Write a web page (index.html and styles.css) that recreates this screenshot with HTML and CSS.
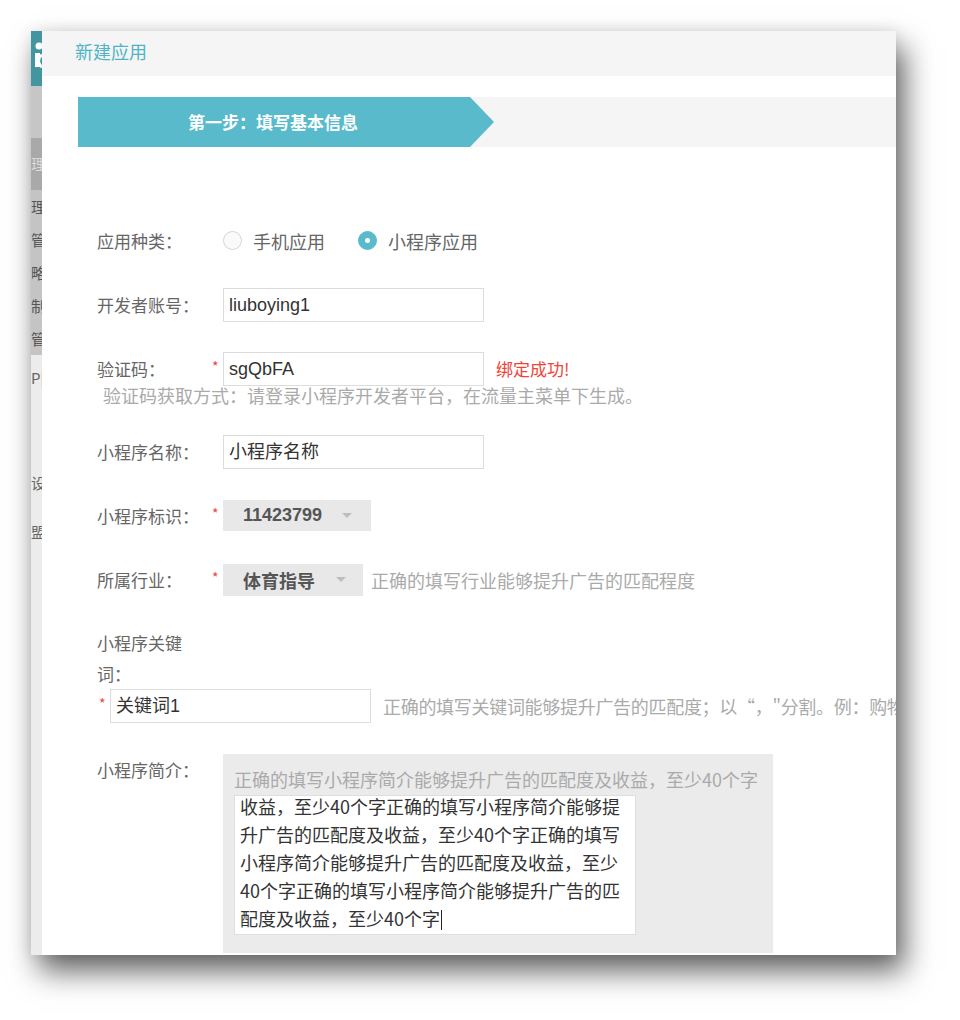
FILE: index.html
```html
<!DOCTYPE html>
<html lang="zh-CN">
<head>
  <meta charset="UTF-8" />
  <title>新建应用</title>
  <link rel="stylesheet" href="styles.css">
</head>
<body>
  <div class="window">
    <div class="side">
      <div class="side-logo">
        <svg width="11" height="55" viewBox="0 0 11 55">
          <circle cx="8" cy="15" r="3.5" fill="#fff" />
          <path d="M4 22 h5 v14 h-5 z" fill="#fff" />
          <path d="M11 24 a7 7 0 0 0 0 12" stroke="#fff" stroke-width="3" fill="none" />
        </svg>
      </div>
      <div class="side-gap"></div>
      <div class="side-active">理</div>
      <ul class="side-menu">
        <li>理</li>
        <li>管</li>
        <li>略</li>
        <li>制</li>
        <li>管</li>
      </ul>
      <div class="side-rest">
        <span class="side-p">P|</span>
        <span class="side-s">设</span>
        <span class="side-m">盟</span>
      </div>
    </div>

    <div class="main">
      <div class="head">新建应用</div>

      <div class="steps">
        <div class="step-on">第一步：填写基本信息</div>
      </div>

      <div class="form">
        <div class="row">
          <label class="lbl">应用种类：</label>
          <span class="star"></span>
          <div class="radios">
            <span class="radio"><i class="dot"></i>手机应用</span>
            <span class="radio on"><i class="dot"></i>小程序应用</span>
          </div>
        </div>

        <div class="row">
          <label class="lbl">开发者账号：</label>
          <span class="star"></span>
          <div class="input">liuboying1</div>
        </div>

        <div class="row row-tight">
          <label class="lbl">验证码：</label>
          <span class="star">*</span>
          <div class="input">sgQbFA</div>
          <span class="ok">绑定成功!</span>
        </div>
        <p class="tip">验证码获取方式：请登录小程序开发者平台，在流量主菜单下生成。</p>

        <div class="row">
          <label class="lbl">小程序名称：</label>
          <span class="star"></span>
          <div class="input">小程序名称</div>
        </div>

        <div class="row">
          <label class="lbl">小程序标识：</label>
          <span class="star">*</span>
          <div class="select sel-id">11423799<i class="caret"></i></div>
        </div>

        <div class="row">
          <label class="lbl">所属行业：</label>
          <span class="star">*</span>
          <div class="select sel-trade">体育指导<i class="caret"></i></div>
          <span class="hint">正确的填写行业能够提升广告的匹配程度</span>
        </div>

        <div class="row-wrap">
          <label class="lbl lbl-wrap">小程序关键词：</label>
          <div class="wrap-line">
            <span class="star">*</span>
            <div class="input">关键词1</div>
            <span class="hint hint-kw">正确的填写关键词能够提升广告的匹配度；以“，"分割。例：购物</span>
          </div>
        </div>

        <div class="row row-top">
          <label class="lbl">小程序简介：</label>
          <span class="star"></span>
          <div class="intro">
            <p class="intro-tip">正确的填写小程序简介能够提升广告的匹配度及收益，至少40个字</p>
            <div class="textarea">
              <div class="lines">
                <div>收益，至少40个字正确的填写小程序简介能够提</div>
                <div>升广告的匹配度及收益，至少40个字正确的填写</div>
                <div>小程序简介能够提升广告的匹配度及收益，至少</div>
                <div>40个字正确的填写小程序简介能够提升广告的匹</div>
                <div>配度及收益，至少40个字<span class="cursor"></span></div>
              </div>
            </div>
          </div>
        </div>
      </div>
    </div>
  </div>
</body>
</html>
```

FILE: styles.css
```css
body {
  margin: 0;
  padding: 31px 0 65px 31px;
  background: #fff;
  font-family: "Liberation Sans", "Noto Sans CJK SC", sans-serif;
  color: #333;
}
.window {
  display: flex;
  width: 865px;
  height: 924px;
  overflow: hidden;
  background: #fff;
  box-shadow: 8px 16px 28px rgba(0, 0, 0, 0.62), 0 0 14px rgba(0, 0, 0, 0.08);
}

/* cut-off sidebar on the left */
.side {
  width: 11px;
  flex: none;
  display: flex;
  flex-direction: column;
  overflow: hidden;
  font-family: "Noto Sans CJK SC", sans-serif;
  font-size: 15px;
  background: #c8c8c8;
}
.side-logo {
  height: 55px;
  background: #43959f;
}
.side-logo svg {
  display: block;
}
.side-gap {
  height: 52px;
  background: #c6c6c6;
}
.side-active {
  height: 52px;
  line-height: 52px;
  background: #a9a9a9;
  color: #dadada;
  white-space: nowrap;
}
.side-menu {
  list-style: none;
  margin: 0;
  padding: 0;
  background: #c4c4c4;
  color: #555;
}
.side-menu li {
  height: 33px;
  line-height: 33px;
  white-space: nowrap;
}
.side-rest {
  flex: 1;
  display: flex;
  flex-direction: column;
  background: #ececec;
  color: #666;
  white-space: nowrap;
}
.side-p {
  margin-top: 12px;
}
.side-s {
  margin-top: 84px;
}
.side-m {
  margin-top: 28px;
}

.main {
  flex: 1;
  min-width: 0;
  font-family: "Noto Sans CJK SC", sans-serif;
}
.head {
  height: 45px;
  line-height: 40px;
  padding-left: 33px;
  background: #f5f5f5;
  color: #4fb4c5;
  font-size: 18px;
}
.steps {
  margin: 21px 0 0 36px;
  height: 50px;
  background: #f5f5f5;
}
.step-on {
  position: relative;
  width: 282px;
  height: 50px;
  line-height: 50px;
  padding-left: 110px;
  background: #59bacb;
  color: #fff;
  font-size: 17px;
  font-weight: bold;
}
.step-on::after {
  content: "";
  position: absolute;
  left: 100%;
  top: 0;
  border-left: 24px solid #59bacb;
  border-top: 25px solid transparent;
  border-bottom: 25px solid transparent;
}

.form {
  padding: 77px 0 0 55px;
}
.row {
  display: flex;
  align-items: center;
  height: 33px;
  margin-bottom: 31px;
  white-space: nowrap;
}
.row-tight {
  margin-bottom: 0;
}
.lbl {
  width: 115px;
  flex: none;
  font-size: 17px;
  color: #666;
}
.star {
  width: 11px;
  flex: none;
  margin-top: -6px;
  color: #f0443a;
  font-size: 14px;
  line-height: 14px;
}
.radios {
  display: flex;
  gap: 33px;
  font-size: 18px;
  color: #666;
}
.radio {
  display: flex;
  align-items: center;
  gap: 11px;
}
.dot {
  width: 17px;
  height: 17px;
  border: 1px solid #d4d4d4;
  border-radius: 50%;
  background: #fafafa;
  box-sizing: content-box;
}
.radio.on .dot {
  border-color: #59bacb;
  background: #59bacb;
  position: relative;
}
.radio.on .dot::after {
  content: "";
  position: absolute;
  left: 6px;
  top: 6px;
  width: 5px;
  height: 5px;
  border-radius: 50%;
  background: #fff;
}
.input {
  width: 261px;
  height: 34px;
  flex: none;
  box-sizing: border-box;
  border: 1px solid #dcdcdc;
  padding-left: 5px;
  line-height: 32px;
  font-family: "Liberation Sans", "Noto Sans CJK SC", sans-serif;
  font-size: 18px;
  color: #333;
}
.ok {
  margin-left: 12px;
  font-size: 17px;
  color: #f0443a;
}
.tip {
  margin: 0 0 30px 6px;
  line-height: 20px;
  font-size: 18px;
  color: #aaa;
}
.select {
  display: flex;
  flex: none;
  align-items: center;
  justify-content: space-between;
  height: 31px;
  box-sizing: border-box;
  padding: 0 19px 0 20px;
  background: #e8e8e8;
  font-family: "Liberation Sans", "Noto Sans CJK SC", sans-serif;
  font-size: 18px;
  font-weight: bold;
  color: #555;
}
.sel-id {
  width: 148px;
}
.sel-trade {
  width: 140px;
  height: 32px;
  padding-right: 17px;
}
.caret {
  width: 0;
  height: 0;
  border-left: 5px solid transparent;
  border-right: 5px solid transparent;
  border-top: 5px solid #bdbdbd;
}
.hint {
  margin-left: 8px;
  font-size: 18px;
  color: #aaa;
}
.row-wrap {
  margin-bottom: 31px;
}
.lbl-wrap {
  display: block;
  line-height: 31px;
}
.wrap-line {
  display: flex;
  align-items: center;
  height: 34px;
  padding-left: 2px;
  white-space: nowrap;
}
.hint-kw {
  margin-left: 12px;
  letter-spacing: -0.3px;
}

.row-top {
  align-items: flex-start;
  height: auto;
}
.row-top .lbl {
  line-height: 31px;
}
.intro {
  width: 550px;
  padding: 12px 0 18px 11px;
  box-sizing: border-box;
  background: #ebebeb;
}
.intro-tip {
  margin: 0;
  line-height: 26px;
  font-size: 18px;
  color: #aaa;
}
.textarea {
  width: 402px;
  height: 140px;
  margin-top: 3px;
  box-sizing: border-box;
  border: 1px solid #dedede;
  background: #fff;
  overflow: hidden;
}
.lines {
  margin-top: -4px;
  padding-left: 5px;
  line-height: 28px;
  font-size: 18px;
  color: #333;
}
.cursor {
  display: inline-block;
  width: 1px;
  height: 20px;
  margin-left: 1px;
  background: #222;
  vertical-align: -4px;
}
```
